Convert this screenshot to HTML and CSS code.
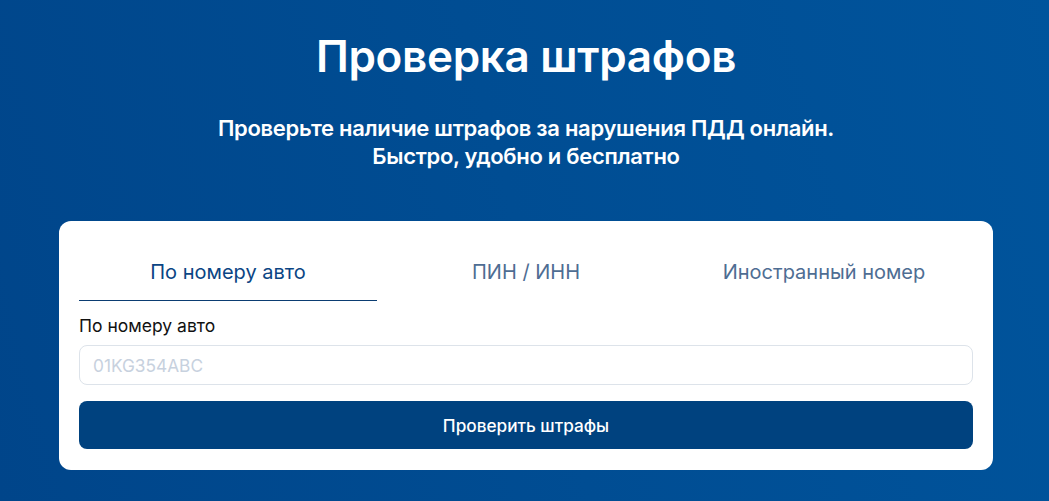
FILE: index.html
```html
<!DOCTYPE html>
<html lang="ru">
<head>
<meta charset="utf-8">
<title>Проверка штрафов</title>
<link rel="stylesheet" href="styles.css">
</head>
<body>
<main class="page">
  <header class="hero">
    <h1 class="title">Проверка штрафов</h1>
    <p class="subtitle">Проверьте наличие штрафов за нарушения ПДД онлайн.<br>Быстро, удобно и бесплатно</p>
  </header>
  <section class="card">
    <nav class="tabs">
      <button class="tab active">По номеру авто</button>
      <button class="tab">ПИН / ИНН</button>
      <button class="tab">Иностранный номер</button>
    </nav>
    <form class="form">
      <label class="label" for="num">По номеру авто</label>
      <input class="input" id="num" type="text" placeholder="01KG354ABC">
      <button class="submit" type="button">Проверить штрафы</button>
    </form>
  </section>
</main>
</body>
</html>
```
FILE: styles.css
```css
* { box-sizing: border-box; }
html, body { margin: 0; height: 100%; }
body {
  font-family: Inter, "Noto Sans", sans-serif;
  background: linear-gradient(75deg, #00458a 0%, #004d93 50%, #00549c 100%);
  color: #fff;
  overflow: hidden;
}
.page {
  display: flex;
  flex-direction: column;
  align-items: center;
  padding-top: 26px;
  padding-left: 3px;
}
.hero { text-align: center; }
.title {
  margin: 0;
  font-size: 44px;
  line-height: 60px;
  font-weight: 600;
  letter-spacing: -0.3px;
}
.subtitle {
  margin: 28px 0 0;
  font-size: 22px;
  line-height: 28px;
  font-weight: 600;
  letter-spacing: -0.3px;
}
.card {
  margin-top: 51px;
  width: 934px;
  background: #fff;
  border-radius: 12px;
  padding: 20px 20px 21px;
}
.tabs {
  display: grid;
  grid-template-columns: repeat(3, 1fr);
}
.tab {
  border: 0;
  background: none;
  font-family: inherit;
  font-size: 20px;
  line-height: 24px;
  padding: 19px 0 16px;
  color: #4e6d93;
  border-bottom: 1px solid transparent;
  cursor: pointer;
}
.tab.active {
  color: #0b4584;
  border-bottom-color: #0b3d72;
}
.form { display: flex; flex-direction: column; }
.label {
  margin-top: 14px;
  font-size: 17.5px;
  line-height: 21px;
  color: #111;
}
.input {
  margin-top: 9px;
  height: 40px;
  border: 1px solid #dde3ea;
  border-radius: 8px;
  padding: 0 13px;
  font-family: inherit;
  font-size: 17.3px;
  color: #111;
}
.input::placeholder { color: #c7d1de; }
.submit {
  margin-top: 16px;
  height: 48px;
  border: 0;
  border-radius: 8px;
  background: #00427f;
  color: #fff;
  font-family: inherit;
  font-size: 17.2px;
  font-weight: 500;
}
```
